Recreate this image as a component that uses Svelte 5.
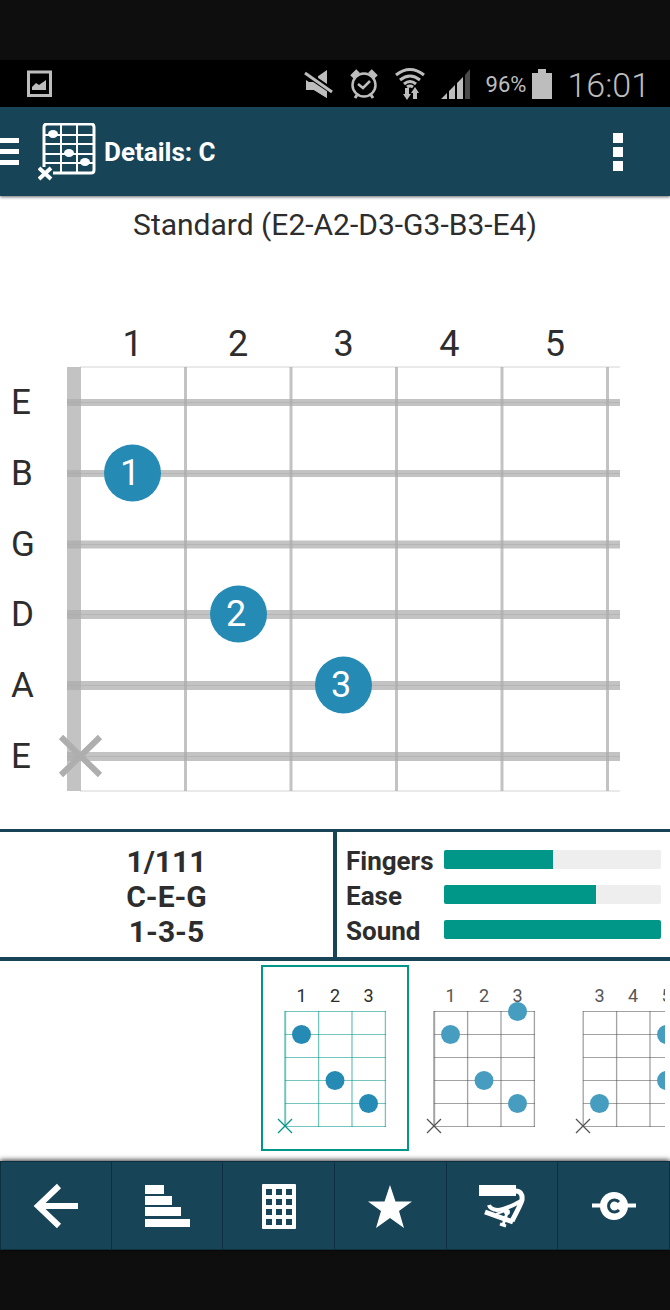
<script>
  const frets = [1, 2, 3, 4, 5];
  const strings = [
    { name: 'E', y: 402, w: 7 },
    { name: 'B', y: 473, w: 7 },
    { name: 'G', y: 544, w: 8 },
    { name: 'D', y: 614, w: 9 },
    { name: 'A', y: 685, w: 9 },
    { name: 'E', y: 756, w: 9 }
  ];
  const fingers = [
    { n: 1, x: 132, y: 473 },
    { n: 2, x: 238, y: 614 },
    { n: 3, x: 343, y: 685 }
  ];
  const ratings = [
    { id: 'fingers', label: 'Fingers', value: 50 },
    { id: 'ease', label: 'Ease', value: 70 },
    { id: 'sound', label: 'Sound', value: 100 }
  ];
  const shapes = [
    { first: 1, nut: true, active: true, dots: [[0, 1], [1, 3], [2, 4]] },
    { first: 1, nut: true, active: false, dots: [[2, 0], [0, 1], [1, 3], [2, 4]] },
    { first: 3, nut: false, active: false, dots: [[2, 1], [2, 3], [0, 4]] }
  ];
</script>

<div class="screen">
  <div class="band"></div>

  <div class="status">
    <svg class="shot" width="26" height="28" viewBox="0 0 26 28">
      <path d="M1.500 2h22v23.500h-22z" fill="none" stroke="#bdbdbd" stroke-width="3" />
      <path d="M5 20v-3l4-4 3 2 7-5v10z" fill="#bdbdbd" />
    </svg>
    <div class="indicators">
      <svg width="30" height="30" viewBox="0 0 30 30">
        <path d="M2 10h8L23 1v28l-13-8H2z" fill="#bdbdbd" />
        <path d="M2 2h9v8H2zM0 3l28 19" fill="#000" stroke="#000" stroke-width="6" />
        <path d="M2 11l21 14v4l-13-8H2z" fill="#bdbdbd" />
        <path d="M1 4l27 19" stroke="#bdbdbd" stroke-width="3" />
      </svg>
      <svg width="30" height="32" viewBox="0 0 30 32" fill="none" stroke="#bdbdbd">
        <circle cx="15" cy="17" r="11.500" stroke-width="2.500" />
        <path d="M3 9l6-6M27 9l-6-6" stroke-width="5" />
        <path d="M9 16l5 4 7-7" stroke-width="2.500" />
        <path d="M8 27l-2 3M22 27l2 3" stroke-width="3" />
      </svg>
      <svg width="32" height="34" viewBox="0 0 32 34" fill="none" stroke="#bdbdbd" stroke-width="3">
        <path d="M2 8Q16-3 30 8M6 13q10-8 20 0M10 17q6-5 12 0M13 20q3-2 6 0" />
        <path d="M13 21v7M21 24v8" stroke-width="4" />
        <path d="M9 27h8l-4 6zM17 26h8l-4-6z" fill="#bdbdbd" stroke="none" />
      </svg>
      <svg width="30" height="30" viewBox="0 0 30 30" fill="#bdbdbd">
        <path d="M0 30l6-6v6zM8 22l6-6v14H8zM16 14l6-6v22h-6z" />
        <path d="M24 6l5-6v30h-5z" fill="#4a4a4a" />
      </svg>
      <span class="percent">96%</span>
      <svg width="20" height="30" viewBox="0 0 20 30" fill="#bdbdbd"><path d="M6 0h8v4h6v26H0V4h6z" /></svg>
      <time class="clock">16:01</time>
    </div>
  </div>

  <header class="appbar">
    <button class="menu" aria-label="Menu">
      <svg width="19" height="28" viewBox="0 0 19 28" fill="#fff"><path d="M0 0h19v5H0zM0 11h19v5H0zM0 22h19v5H0z" /></svg>
    </button>
    <svg class="logo" width="58" height="58" viewBox="0 0 58 58" fill="none" stroke="#fff">
      <path d="M6 44V4q0-3 3-3h44q3 0 3 3v43q0 3-3 3H15" stroke-width="3" />
      <path d="M23 2v48M39 2v48M6 12h49M6 21h49M6 31h49M6 40h49" stroke-width="2" />
      <g fill="#fff" stroke="none">
        <ellipse cx="15" cy="11" rx="5" ry="4" /><ellipse cx="31" cy="30" rx="5" ry="4" /><ellipse cx="47" cy="39" rx="5" ry="4" />
      </g>
      <path d="M1 45l12 11M13 45L1 56" stroke-width="4" />
    </svg>
    <h1>Details: C</h1>
    <button class="more" aria-label="More options">
      <svg width="10" height="38" viewBox="0 0 10 38" fill="#fff"><path d="M0 0h10v10H0zM0 14h10v10H0zM0 28h10v10H0z" /></svg>
    </button>
  </header>

  <main>
    <p class="tuning">Standard (E2-A2-D3-G3-B3-E4)</p>

    <svg class="board" viewBox="0 313 670 516" role="img" aria-label="C chord diagram">
      <path d="M80 367H620M80 791H620" stroke="#d4d4d4" />
      <path d="M67 367h14v424H67z" fill="#acacac" fill-opacity=".72" />
      {#each frets as f, i}
        <text x={132.500 + i * 105.600} y="356" class="num">{f}</text>
        <path d="M{185.500 + i * 105.500} 367v424" stroke="#acacac" stroke-opacity=".72" stroke-width="3" />
      {/each}
      {#each strings as s}
        <text x="11" y={s.y + 12} class="name">{s.name}</text>
        <path d="M67 {s.y + 0.5}H620" stroke="#acacac" stroke-opacity=".72" stroke-width={s.w} />
        <path d="M67 {s.y + 0.5}H620" stroke="#acacac" stroke-opacity=".6" />
      {/each}
      <path d="M61 737l39 38M100 737l-39 38" stroke="#aeaeae" stroke-width="6" />
      {#each fingers as f}
        <circle cx={f.x + 0.5} cy={f.y} r="28.500" fill="#258ab4" />
        <text x={f.x - 2} y={f.y + 12} class="finger">{f.n}</text>
      {/each}
    </svg>

    <section class="info">
      <div class="summary">
        <span>1/111</span>
        <span>C-E-G</span>
        <span>1-3-5</span>
      </div>
      <div class="ratings">
        {#each ratings as r}
          <span id={r.id}>{r.label}</span>
          <div class="track" role="meter" aria-labelledby={r.id} aria-valuenow={r.value} aria-valuemin="0" aria-valuemax="100">
            <div class="fill" style="width: {r.value}%"></div>
          </div>
        {/each}
      </div>
    </section>

    <section class="shapes">
      {#each shapes as s}
        <button class="shape" class:active={s.active} aria-label="Chord shape from fret {s.first}">
          <svg width="148" height="186" viewBox="0 0 148 186">
            <g fill="none" stroke="currentColor" stroke-opacity=".55">
              {#each [0, 1, 2, 3, 4, 5] as r}<path d="M24 {46.500 + r * 23}h101" />{/each}
              {#each [0, 1, 2, 3] as c}<path d="M{24.200 + c * 33.400} 46v116" stroke-width={c === 0 && s.nut ? 2 : 1.300} />{/each}
            </g>
            <path d="M17 154l14 14M31 154l-14 14" stroke="currentColor" stroke-width="1.300" />
            {#each [0, 1, 2] as c}<text x={40.500 + c * 33.500} y="37">{s.first + c}</text>{/each}
            {#each s.dots as [c, r]}<circle cx={40.500 + c * 33.500} cy={46.500 + r * 23} r="9.500" />{/each}
          </svg>
        </button>
      {/each}
    </section>
  </main>

  <nav>
    <button aria-label="Back">
      <svg width="46" height="46" viewBox="0 0 46 46" fill="none" stroke="#fff" stroke-width="6"><path d="M26 3L5 23l21 20M5 23h40" /></svg>
    </button>
    <button aria-label="Sort">
      <svg width="46" height="46" viewBox="0 0 46 46" fill="#fff"><path d="M1 2h19v9H1zM1 13h27v9H1zM1 24h36v9H1zM1 36h45v8H1z" /></svg>
    </button>
    <button aria-label="Fretboard">
      <svg width="46" height="46" viewBox="0 0 46 46">
        <rect x="6" y="1" width="34" height="45" rx="1" fill="#fff" />
        {#each [0, 1, 2, 3] as r}{#each [0, 1, 2] as c}<rect x={10 + c * 10} y={6 + r * 10} width="6" height="6" fill="#184457" />{/each}{/each}
      </svg>
    </button>
    <button aria-label="Favourite">
      <svg width="46" height="46" viewBox="0 0 46 46" fill="#fff"><path d="M23 2l5.500 16.500H45L32 28l5 17-14-10-14 10 5-17L1 18.500h16.500z" /></svg>
    </button>
    <button aria-label="Capo">
      <svg width="46" height="46" viewBox="0 0 46 46" fill="none" stroke="#fff">
        <path d="M0 2h37v11H0z" fill="#fff" stroke="none" />
        <path d="M36 8q8 0 7 9-1 4-10 21" stroke-width="5" />
        <path d="M6 29l28 10" stroke-width="5" />
        <path d="M10 22q1 4 8 5 8 0 24-9" stroke-width="4" />
        <path d="M28 30l-4 12M21 41l6 2" stroke-width="3" />
        <path d="M17 31l9-3" stroke-width="2" />
        <circle cx="28" cy="29" r="3" fill="#fff" stroke="none" />
      </svg>
    </button>
    <button aria-label="Chord C">
      <svg width="46" height="46" viewBox="0 0 46 46" fill="none">
        <path d="M1 22.500h44" stroke="#fff" stroke-width="4" />
        <circle cx="23" cy="23" r="14" fill="#fff" />
        <path d="M28 19a6 6 0 1 0 0 8" stroke="#184457" stroke-width="3" />
      </svg>
    </button>
  </nav>
  <div class="band"></div>
</div>

<style>
  :global(body) { margin: 0; background: #0e0e0e; }
  .screen { font-family: Roboto, sans-serif; color: #2d2d2d; background: #fff; }
  svg { display: block; flex: none; }
  button { appearance: none; border: 0; padding: 0; background: none; color: inherit; font: inherit; cursor: pointer; }
  .band { height: 60px; background: #0e0e0e; }
  .status { display: flex; align-items: center; justify-content: space-between; height: 47px; box-sizing: border-box; padding: 0 20px 0 27px; background: #000; color: #bdbdbd; }
  .indicators { display: flex; align-items: center; gap: 15px; }
  .percent { font-size: 22px; line-height: 26px; padding-top: 2px; }
  .percent + svg { margin-left: -9px; }
  .clock { font-size: 34px; line-height: 40px; padding-top: 2px; font-weight: 300; }
  .appbar { position: relative; display: flex; align-items: center; height: 89px; background: #184457; color: #fff; box-shadow: 0 1px 3px rgba(0, 0, 0, 0.6); }
  .logo { margin-left: 19px; }
  h1 { margin: 0 0 0 8px; font-size: 26px; line-height: 32px; font-weight: 700; }
  .more { margin: 0 47px 0 auto; }
  .tuning { margin: 0; padding: 9px 0 68px; font-size: 30px; line-height: 40px; text-align: center; }
  .board { width: 100%; height: auto; fill: #2d2d2d; }
  .num { font-size: 36px; text-anchor: middle; }
  .name { font-size: 35px; }
  .finger { font-size: 36px; text-anchor: middle; fill: #fff; }
  .info { display: grid; grid-template-columns: 1fr 1fr; border: solid #184457; border-width: 3px 0 4px; font-size: 26px; line-height: 35px; font-weight: 700; }
  .summary { display: flex; flex-direction: column; align-items: center; padding: 12px 2px 8px 0; font-size: 30px; }
  .ratings { display: grid; grid-template-columns: 88px 1fr; column-gap: 10px; align-items: center; padding: 12px 9px 8px 9px; border-left: 4px solid #184457; margin-left: -2px; }
  .track { height: 19px; border-radius: 2px; overflow: hidden; background: #eee; margin-bottom: 4px; }
  .fill { height: 100%; background: #009688; }
  .shapes { display: flex; gap: 1px; height: 200px; margin: 0 5px 0 0; padding-left: calc(50% - 74px); overflow: hidden; }
  .shape { flex: none; align-self: flex-start; margin-top: 4px; color: #555; }
  .shape.active { color: #009688; outline: 2px solid #009688; outline-offset: -2px; }
  .shape text { fill: #555; font-size: 18px; text-anchor: middle; }
  .shape circle { fill: #479dc0; }
  .shape.active text { fill: #2d2d2d; }
  .shape.active circle { fill: #258ab4; }
  nav { position: relative; display: grid; grid-template-columns: repeat(6, 1fr); height: 89px; background: #184457; box-shadow: 0 -1px 5px rgba(0, 0, 0, 0.8); }
  nav button { display: grid; place-items: center; border: 1px solid #0c3040; border-left-width: 0; }
  nav button:first-child { border-left-width: 1px; }
</style>
